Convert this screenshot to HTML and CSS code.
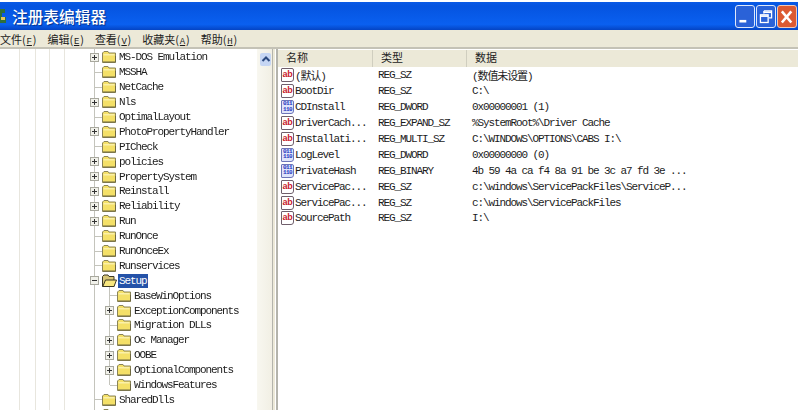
FILE: index.html
```html
<!DOCTYPE html>
<html lang="zh">
<head>
<meta charset="utf-8">
<title>注册表编辑器</title>
<link rel="stylesheet" href="styles.css">
</head>
<body>
<svg class="defs" width="0" height="0" aria-hidden="true">
  <symbol id="folder" viewBox="0 0 14 12">
    <path d="M.5 2 2 .5h4L7 2h6.500v9.500H.5z" fill="#f4e068" stroke="#8a8458"/>
    <path d="M1.500 3h11v1.500h-11z" fill="#fbf0a8"/>
    <path d="M1 11h12.500V5" fill="none" stroke="#6e6840"/>
  </symbol>
  <symbol id="open" viewBox="0 0 15 13">
    <path d="M.5 2.500 2 1h4l1 1.500h5v10H.5z" fill="#d8c778" stroke="#3c3924"/>
    <path d="M3.500 6h11l-2.500 6.500H.8z" fill="#f8e77e" stroke="#3c3924"/>
  </symbol>
  <symbol id="plus" viewBox="0 0 9 9">
    <rect x=".5" y=".5" width="8" height="8" fill="#f1f1ea" stroke="#a8a89e"/>
    <path d="M2 4.500h5M4.500 2v5" stroke="#333"/>
  </symbol>
  <symbol id="minus" viewBox="0 0 9 9">
    <rect x=".5" y=".5" width="8" height="8" fill="#f1f1ea" stroke="#a8a89e"/>
    <path d="M2 4.500h5" stroke="#333"/>
  </symbol>
</svg>

<div class="window">
  <header class="titlebar">
    <svg class="appicon" viewBox="0 0 6 20" aria-hidden="true"><path d="M0 3h5v4H2v4h4v6H0z" fill="#2f6f3a"/><path d="M1 11h4v3H1z" fill="#e3c65a"/></svg>
    <h1 class="title">注册表编辑器</h1>
    <div class="controls">
      <span class="ctl ctl-min"><svg viewBox="0 0 21 22"><rect x="4" y="15" width="8" height="3" fill="#fff"/></svg></span>
      <span class="ctl ctl-max"><svg viewBox="0 0 21 22"><path d="M8 4.500h9v8h-3M8 4.500v3" fill="none" stroke="#fff" stroke-width="1.500"/><path d="M8 6h9" stroke="#fff" stroke-width="2"/><rect x="4" y="9" width="9" height="9" fill="none" stroke="#fff" stroke-width="1.500"/><path d="M4 10.500h9" stroke="#fff" stroke-width="2"/></svg></span>
      <span class="ctl ctl-close"><svg viewBox="0 0 21 22"><path d="M4.500 5l11 13M15.500 5l-11 13" stroke="#fff" stroke-width="3"/></svg></span>
    </div>
  </header>

  <nav class="menubar">
    <span class="menu">文件(<u>F</u>)</span>
    <span class="menu">编辑(<u>E</u>)</span>
    <span class="menu">查看(<u>V</u>)</span>
    <span class="menu">收藏夹(<u>A</u>)</span>
    <span class="menu">帮助(<u>H</u>)</span>
  </nav>

  <main class="panes">
    <section class="tree-pane">
      <div class="tree">
        <span class="guide g1"></span><span class="guide g2"></span><span class="guide g3"></span><span class="guide g4"></span>
        <span class="guide g6"></span><span class="guide g7"></span>
        <div class="node"><svg class="exp"><use href="#plus"/></svg><svg class="fld"><use href="#folder"/></svg><span class="label">MS-DOS Emulation</span></div>
        <div class="node"><span class="noexp"></span><svg class="fld"><use href="#folder"/></svg><span class="label">MSSHA</span></div>
        <div class="node"><span class="noexp"></span><svg class="fld"><use href="#folder"/></svg><span class="label">NetCache</span></div>
        <div class="node"><svg class="exp"><use href="#plus"/></svg><svg class="fld"><use href="#folder"/></svg><span class="label">Nls</span></div>
        <div class="node"><span class="noexp"></span><svg class="fld"><use href="#folder"/></svg><span class="label">OptimalLayout</span></div>
        <div class="node"><svg class="exp"><use href="#plus"/></svg><svg class="fld"><use href="#folder"/></svg><span class="label">PhotoPropertyHandler</span></div>
        <div class="node"><span class="noexp"></span><svg class="fld"><use href="#folder"/></svg><span class="label">PICheck</span></div>
        <div class="node"><svg class="exp"><use href="#plus"/></svg><svg class="fld"><use href="#folder"/></svg><span class="label">policies</span></div>
        <div class="node"><svg class="exp"><use href="#plus"/></svg><svg class="fld"><use href="#folder"/></svg><span class="label">PropertySystem</span></div>
        <div class="node"><svg class="exp"><use href="#plus"/></svg><svg class="fld"><use href="#folder"/></svg><span class="label">Reinstall</span></div>
        <div class="node"><svg class="exp"><use href="#plus"/></svg><svg class="fld"><use href="#folder"/></svg><span class="label">Reliability</span></div>
        <div class="node"><svg class="exp"><use href="#plus"/></svg><svg class="fld"><use href="#folder"/></svg><span class="label">Run</span></div>
        <div class="node"><span class="noexp"></span><svg class="fld"><use href="#folder"/></svg><span class="label">RunOnce</span></div>
        <div class="node"><span class="noexp"></span><svg class="fld"><use href="#folder"/></svg><span class="label">RunOnceEx</span></div>
        <div class="node"><span class="noexp"></span><svg class="fld"><use href="#folder"/></svg><span class="label">Runservices</span></div>
        <div class="node"><svg class="exp"><use href="#minus"/></svg><svg class="fld fld-open"><use href="#open"/></svg><span class="label selected">Setup</span></div>
        <div class="node sub"><span class="noexp"></span><svg class="fld"><use href="#folder"/></svg><span class="label">BaseWinOptions</span></div>
        <div class="node sub"><svg class="exp"><use href="#plus"/></svg><svg class="fld"><use href="#folder"/></svg><span class="label">ExceptionComponents</span></div>
        <div class="node sub"><span class="noexp"></span><svg class="fld"><use href="#folder"/></svg><span class="label">Migration DLLs</span></div>
        <div class="node sub"><svg class="exp"><use href="#plus"/></svg><svg class="fld"><use href="#folder"/></svg><span class="label">Oc Manager</span></div>
        <div class="node sub"><svg class="exp"><use href="#plus"/></svg><svg class="fld"><use href="#folder"/></svg><span class="label">OOBE</span></div>
        <div class="node sub"><svg class="exp"><use href="#plus"/></svg><svg class="fld"><use href="#folder"/></svg><span class="label">OptionalComponents</span></div>
        <div class="node sub"><span class="noexp"></span><svg class="fld"><use href="#folder"/></svg><span class="label">WindowsFeatures</span></div>
        <div class="node"><span class="noexp"></span><svg class="fld"><use href="#folder"/></svg><span class="label">SharedDlls</span></div>
        <div class="node"><svg class="exp"><use href="#plus"/></svg><svg class="fld"><use href="#folder"/></svg><span class="label">Shell Extensions</span></div>
      </div>
      <div class="scrollbar">
        <span class="arrow"><svg viewBox="0 0 12 13"><path d="M2.500 8 6 4.500 9.500 8" fill="none" stroke="#2c4a80" stroke-width="2"/></svg></span>
      </div>
    </section>

    <section class="list-pane">
      <div class="list-head">
        <span class="col col-name">名称</span>
        <span class="col col-type">类型</span>
        <span class="col col-data">数据</span>
      </div>
      <div class="row"><span class="ico ico-sz"></span><span class="c-name">(默认)</span><span class="c-type">REG_SZ</span><span class="c-data">(数值未设置)</span></div>
      <div class="row"><span class="ico ico-sz"></span><span class="c-name">BootDir</span><span class="c-type">REG_SZ</span><span class="c-data">C:\</span></div>
      <div class="row"><span class="ico ico-bin"></span><span class="c-name">CDInstall</span><span class="c-type">REG_DWORD</span><span class="c-data">0x00000001 (1)</span></div>
      <div class="row"><span class="ico ico-sz"></span><span class="c-name">DriverCach...</span><span class="c-type">REG_EXPAND_SZ</span><span class="c-data">%SystemRoot%\Driver Cache</span></div>
      <div class="row"><span class="ico ico-sz"></span><span class="c-name">Installati...</span><span class="c-type">REG_MULTI_SZ</span><span class="c-data">C:\WINDOWS\OPTIONS\CABS I:\</span></div>
      <div class="row"><span class="ico ico-bin"></span><span class="c-name">LogLevel</span><span class="c-type">REG_DWORD</span><span class="c-data">0x00000000 (0)</span></div>
      <div class="row"><span class="ico ico-bin"></span><span class="c-name">PrivateHash</span><span class="c-type">REG_BINARY</span><span class="c-data">4b 59 4a ca f4 8a 91 be 3c a7 fd 3e ...</span></div>
      <div class="row"><span class="ico ico-sz"></span><span class="c-name">ServicePac...</span><span class="c-type">REG_SZ</span><span class="c-data">c:\windows\ServicePackFiles\ServiceP...</span></div>
      <div class="row"><span class="ico ico-sz"></span><span class="c-name">ServicePac...</span><span class="c-type">REG_SZ</span><span class="c-data">c:\windows\ServicePackFiles</span></div>
      <div class="row"><span class="ico ico-sz"></span><span class="c-name">SourcePath</span><span class="c-type">REG_SZ</span><span class="c-data">I:\</span></div>
    </section>
  </main>
</div>
</body>
</html>
```

FILE: styles.css
```css
* { box-sizing: border-box; }
html, body { margin: 0; padding: 0; }
body { width: 801px; height: 410px; overflow: hidden; background: #fff; }
.defs { position: absolute; }

.window {
  display: flex;
  flex-direction: column;
  width: 798px;
  height: 410px;
  font-family: "Liberation Mono", "Noto Sans CJK SC", monospace;
  font-size: 11px;
  letter-spacing: -1.1px;
  color: #1c1c1c;
  filter: blur(.35px);
}

.titlebar {
  display: flex;
  align-items: center;
  height: 30px;
  flex: none;
  border-top: 2px solid #fff;
  background: linear-gradient(#0a5ae6 0, #0554e0 15%, #0a60f0 80%, #0444c4 100%);
}
.appicon { width: 6px; height: 20px; flex: none; }
.title {
  margin: 0 0 0 6px;
  font: 500 15.700px "Noto Sans CJK SC", sans-serif;
  letter-spacing: 0;
  color: #fff;
  text-shadow: 1px 1px 1px #03308c;
}
.controls { display: flex; gap: 1px; margin-left: auto; margin-right: 1px; }
.ctl { width: 20px; height: 23px; border: 1px solid #dfe8fa; border-radius: 3px; background: #2a62d8; display: block; }
.ctl svg { display: block; width: 100%; height: 100%; }
.ctl-close { background: #dc5a32; border-color: #f0c8b8; }

.menubar {
  display: flex;
  gap: 11px;
  height: 17px;
  flex: none;
  align-items: center;
  background: #ece9d8;
  font-family: "Noto Sans CJK SC", sans-serif;
  font-size: 11px;
  letter-spacing: 0;
}
.menu u { display: inline-block; width: 7px; text-align: center; font-family: "Liberation Mono", monospace; font-size: 9px; letter-spacing: 0; }

.panes {
  display: flex;
  flex: 1;
  min-height: 0;
  border-top: 2px solid #c4c2b6;
}

.tree-pane {
  display: flex;
  width: 278px;
  flex: none;
  border-right: 2px solid #b4b4ac;
}
.tree {
  position: relative;
  width: 257px;
  flex: none;
  padding-top: 1px;
  overflow: hidden;
  background: #fff;
}
.guide { position: absolute; top: 0; bottom: 0; width: 1px; background: #e8e6de; }
.g1 { left: 19px; }
.g2 { left: 35px; }
.g3 { left: 49px; }
.g4 { left: 64px; }
.g6 { left: 94px; background: #c4c4bc; }
.g7 { left: 109px; top: 238px; bottom: auto; height: 98px; background: #c4c4bc; }

.node {
  position: relative;
  display: flex;
  align-items: center;
  height: 14.900px;
  padding-left: 90px;
  white-space: nowrap;
}
.sub { padding-left: 105px; }
.exp { width: 9px; height: 9px; flex: none; margin-right: 3px; background: #fff; }
.noexp { width: 7px; height: 1px; flex: none; margin-left: 5px; background: #c4c4bc; }
.fld { width: 14px; height: 12px; flex: none; margin-right: 2px; }
.fld-open { width: 15px; height: 13px; margin-right: 1px; }
.label { padding: 0 1px; line-height: 14px; }
.selected { background: #2452a8; color: #fff; }

.scrollbar { width: 16px; flex: none; padding: 4px 1px 0 3px; border-right: 1px solid #b4b4ac; box-shadow: 2px 0 0 #ece9d8; background: linear-gradient(90deg, #f8f7f0, #f1efe4); }
.arrow { display: block; height: 13px; background: #c6d6f4; border-radius: 2px; }
.arrow svg { display: block; width: 12px; height: 13px; }

.list-pane { flex: 1; min-width: 0; background: #fff; padding-top: 1px; }
.list-head {
  display: flex;
  height: 17px;
  margin-bottom: .5px;
  background: #ece9d8;
  font-family: "Noto Sans CJK SC", sans-serif;
  font-size: 11px;
  letter-spacing: 0;
}
.col { height: 100%; padding-left: 8px; line-height: 15px; border-right: 1px solid #d0cebf; }
.col-name { width: 95px; }
.col-type { width: 94px; }
.col-data { flex: 1; border: 0; }

.row { display: flex; align-items: center; height: 15.900px; white-space: nowrap; padding-left: 3px; }
.ico {
  display: block;
  width: 13px;
  height: 14px;
  margin-right: 1px;
  flex: none;
  overflow: hidden;
  border: 1px solid #6f5f6c;
  border-radius: 1px 2px 3px 1px;
  background: #fff;
  text-align: center;
}
.ico-sz::before {
  content: "ab";
  display: block;
  font: 700 9px/10px "Liberation Sans", sans-serif;
  letter-spacing: -.3px;
  color: #c8202c;
}
.ico-bin { border-color: #6c74b8; background: #dfe4fa; }
.ico-bin::before {
  content: "011 110";
  display: block;
  font: 700 6px/5.500px "Liberation Mono", monospace;
  letter-spacing: -.6px;
  white-space: normal;
  color: #1f34c0;
}
.c-name { width: 83px; flex: none; }
.c-type { width: 94px; flex: none; }
.c-data { flex: 1; }
```
